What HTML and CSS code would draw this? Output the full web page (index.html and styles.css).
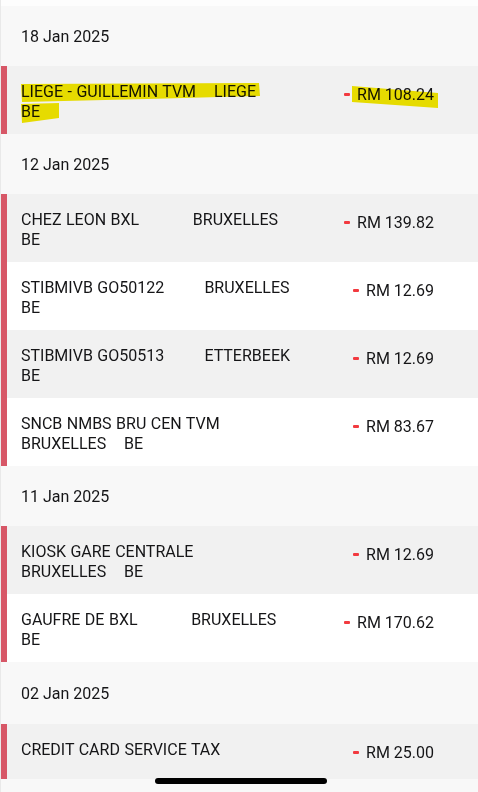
FILE: index.html
```html
<!DOCTYPE html>
<html lang="en">
<head>
<meta charset="utf-8">
<title>Transactions</title>
<link rel="stylesheet" href="styles.css">
</head>
<body>
<div class="screen">
  <div class="top-edge"></div>

  <div class="date-header">18 Jan 2025</div>
  <div class="txn shade">
    <div class="desc">LIEGE - GUILLEMIN TVM    LIEGE        BE</div>
    <div class="amount"><span class="minus"></span>RM 108.24</div>
    <svg class="marker" width="478" height="68" viewBox="0 0 478 68" aria-hidden="true">
      <path d="M14 18 L252 17 L253 30 L140 33 L15 36 Z" fill="#f4e800"/>
      <path d="M14 38 L52 37 L52 52 L15 57 Z" fill="#f4e800"/>
      <path d="M345 20 L431 27 L431 42 L345 36 Z" fill="#f4e800"/>
    </svg>
  </div>

  <div class="date-header">12 Jan 2025</div>
  <div class="txn shade">
    <div class="desc">CHEZ LEON BXL            BRUXELLES    BE</div>
    <div class="amount"><span class="minus"></span>RM 139.82</div>
  </div>
  <div class="txn">
    <div class="desc">STIBMIVB GO50122         BRUXELLES    BE</div>
    <div class="amount"><span class="minus"></span>RM 12.69</div>
  </div>
  <div class="txn shade">
    <div class="desc">STIBMIVB GO50513         ETTERBEEK    BE</div>
    <div class="amount"><span class="minus"></span>RM 12.69</div>
  </div>
  <div class="txn">
    <div class="desc">SNCB NMBS BRU CEN TVM    BRUXELLES    BE</div>
    <div class="amount"><span class="minus"></span>RM 83.67</div>
  </div>

  <div class="date-header">11 Jan 2025</div>
  <div class="txn shade">
    <div class="desc">KIOSK GARE CENTRALE      BRUXELLES    BE</div>
    <div class="amount"><span class="minus"></span>RM 12.69</div>
  </div>
  <div class="txn">
    <div class="desc">GAUFRE DE BXL            BRUXELLES    BE</div>
    <div class="amount"><span class="minus"></span>RM 170.62</div>
  </div>

  <div class="date-header last">02 Jan 2025</div>
  <div class="txn shade">
    <div class="desc">CREDIT CARD SERVICE TAX</div>
    <div class="amount"><span class="minus"></span>RM 25.00</div>
  </div>

  <div class="bottom-bar"></div>
  <div class="home-indicator"></div>
</div>
</body>
</html>
```
FILE: styles.css
```css
* { box-sizing: border-box; }

html, body {
  margin: 0;
  padding: 0;
  background: #f8f8f8;
}

body {
  font-family: Roboto, "Liberation Sans", Arial, sans-serif;
  font-size: 16px;
  color: #151517;
  overflow: hidden;
}

.screen {
  position: relative;
  width: 478px;
  height: 792px;
  overflow: hidden;
  border-left: 1px solid #e9e9e9;
}

.top-edge {
  height: 6px;
  background: #fdfdfd;
}

.date-header {
  height: 60px;
  display: flex;
  align-items: center;
  padding-left: 20px;
  background: #f8f8f8;
  line-height: 19px;
}

.date-header.last {
  height: 62px;
}

.txn {
  position: relative;
  height: 68px;
  display: flex;
  justify-content: space-between;
  align-items: flex-start;
  background: #ffffff;
  border-left: 7px solid #d75767;
  margin-left: -1px;
}

.txn.shade {
  background: #f1f1f1;
}

.desc {
  position: relative;
  z-index: 1;
  width: 294px;
  padding: 16px 0 0 14px;
  line-height: 19.5px;
  white-space: pre-wrap;
  word-spacing: 0.5px;
}

.amount {
  position: relative;
  z-index: 1;
  display: flex;
  align-items: center;
  padding: 19px 44px 0 0;
  line-height: 19px;
  white-space: nowrap;
}

.minus {
  display: inline-block;
  width: 6px;
  height: 3px;
  background: #f23a3f;
  margin-right: 7px;
  border-radius: 1px;
}

.marker {
  position: absolute;
  left: 0;
  top: 0;
  z-index: 2;
  mix-blend-mode: multiply;
  pointer-events: none;
}

.bottom-bar {
  position: absolute;
  left: 0;
  right: 0;
  bottom: 0;
  height: 13px;
  background: #f8f8f8;
}

.home-indicator {
  position: absolute;
  left: 154px;
  bottom: 8px;
  width: 172px;
  height: 6px;
  border-radius: 3px;
  background: #000;
}
```
